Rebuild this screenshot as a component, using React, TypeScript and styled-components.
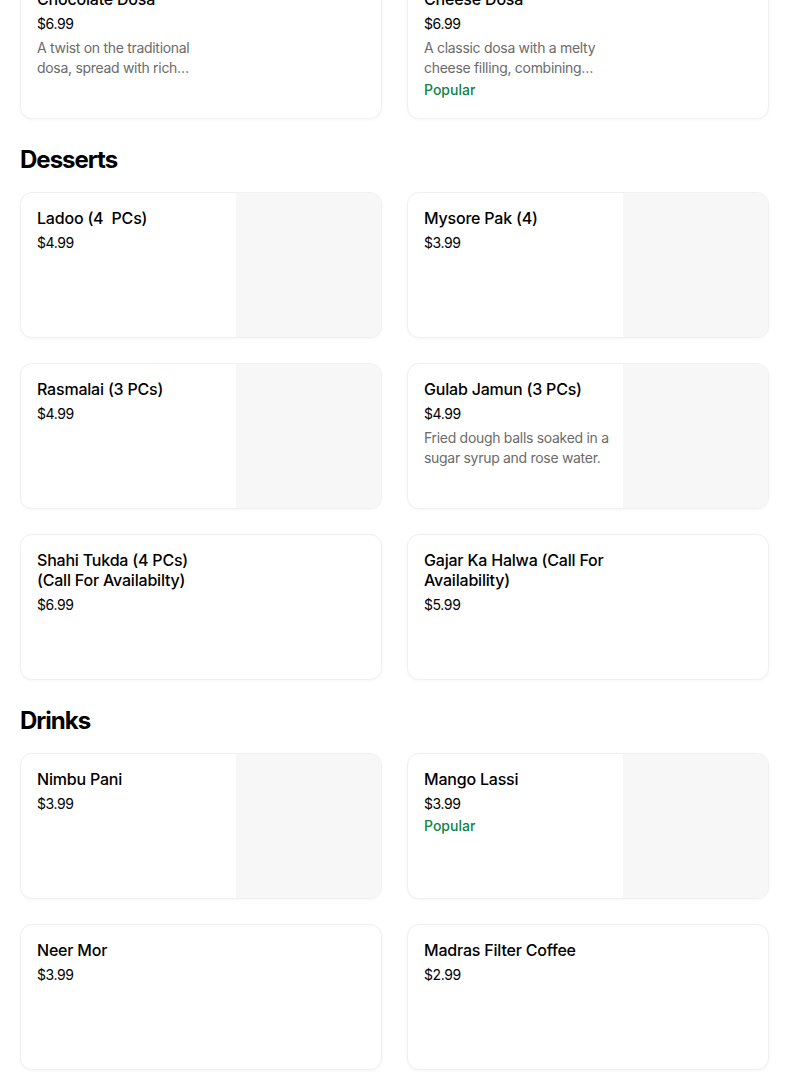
import React from 'react'
import styled, { createGlobalStyle } from 'styled-components'

const GlobalStyle = createGlobalStyle`
  body {
    margin: 0;
    background: #ffffff;
    font-family: Inter, "Noto Sans", "Liberation Sans", sans-serif;
    color: #000000;
    overflow: hidden;
  }
`

const Page = styled.div`
  width: 804px;
  height: 1085px;
  overflow: hidden;
  box-sizing: border-box;
`

const Scroller = styled.div`
  margin-top: -27px;
  padding: 0 35px 0 20px;
  display: flex;
  flex-direction: column;
`

const Section = styled.section`
  display: flex;
  flex-direction: column;
`

const SectionTitle = styled.h2`
  margin: 27px 0 18px;
  font-size: 24px;
  line-height: 28px;
  font-weight: 700;
  letter-spacing: -1px;
`

const Grid = styled.div`
  display: grid;
  grid-template-columns: 1fr 1fr;
  column-gap: 25px;
  row-gap: 25px;
`

const Card = styled.div`
  height: 146px;
  box-sizing: border-box;
  border: 1px solid #f0f0f0;
  border-radius: 12px;
  box-shadow: 0 1px 3px rgba(0, 0, 0, 0.04);
  display: flex;
  overflow: hidden;
  background: #ffffff;
`

const Info = styled.div`
  flex: 1;
  padding: 15px 16px 16px;
  min-width: 0;
`

const TextColumn = styled.div`
  width: 190px;
`

const Name = styled.div`
  max-width: 184px;
  font-size: 16px;
  line-height: 20px;
  font-weight: 500;
  letter-spacing: -0.2px;
  color: #000000;
`

const Price = styled.div`
  margin-top: 5px;
  font-size: 14px;
  line-height: 20px;
  font-weight: 400;
  letter-spacing: -0.4px;
  color: #000000;
`

const Description = styled.div`
  margin-top: 4px;
  font-size: 14px;
  line-height: 20px;
  letter-spacing: -0.3px;
  color: #6b6b6b;
  display: -webkit-box;
  -webkit-line-clamp: 2;
  -webkit-box-orient: vertical;
  overflow: hidden;
`

const Badge = styled.div`
  margin-top: 2px;
  font-size: 14px;
  line-height: 20px;
  font-weight: 500;
  color: #0e8345;
`

const Photo = styled.div`
  width: 145px;
  flex: 0 0 145px;
  background: #f7f7f7;
`

interface Item {
  name: string
  price: string
  description?: string
  popular?: boolean
  photo?: boolean
}

const sections: { title?: string; items: Item[] }[] = [
  {
    items: [
      {
        name: 'Chocolate Dosa',
        price: '$6.99',
        description:
          'A twist on the traditional dosa, spread with rich chocolate for a sweet treat.'
      },
      {
        name: 'Cheese Dosa',
        price: '$6.99',
        description:
          'A classic dosa with a melty cheese filling, combining traditional flavours.',
        popular: true
      }
    ]
  },
  {
    title: 'Desserts',
    items: [
      { name: 'Ladoo (4\u00a0 PCs)', price: '$4.99', photo: true },
      { name: 'Mysore Pak (4)', price: '$3.99', photo: true },
      { name: 'Rasmalai (3 PCs)', price: '$4.99', photo: true },
      {
        name: 'Gulab Jamun (3 PCs)',
        price: '$4.99',
        description: 'Fried dough balls soaked in a sugar syrup and rose water.',
        photo: true
      },
      { name: 'Shahi Tukda (4 PCs) (Call For Availabilty)', price: '$6.99' },
      { name: 'Gajar Ka Halwa (Call For Availability)', price: '$5.99' }
    ]
  },
  {
    title: 'Drinks',
    items: [
      { name: 'Nimbu Pani', price: '$3.99', photo: true },
      { name: 'Mango Lassi', price: '$3.99', popular: true, photo: true },
      { name: 'Neer Mor', price: '$3.99' },
      { name: 'Madras Filter Coffee', price: '$2.99' }
    ]
  }
]

const MenuCard: React.FC<{ item: Item }> = ({ item }) => (
  <Card>
    <Info>
      <TextColumn>
        <Name>{item.name}</Name>
        <Price>{item.price}</Price>
        {item.description && <Description>{item.description}</Description>}
        {item.popular && <Badge>Popular</Badge>}
      </TextColumn>
    </Info>
    {item.photo && <Photo />}
  </Card>
)

const App: React.FC = () => {
  return (
    <Page>
      <GlobalStyle />
      <Scroller>
        {sections.map((section, index) => (
          <Section key={index}>
            {section.title && <SectionTitle>{section.title}</SectionTitle>}
            <Grid>
              {section.items.map(item => (
                <MenuCard key={item.name} item={item} />
              ))}
            </Grid>
          </Section>
        ))}
      </Scroller>
    </Page>
  )
}

export default App
